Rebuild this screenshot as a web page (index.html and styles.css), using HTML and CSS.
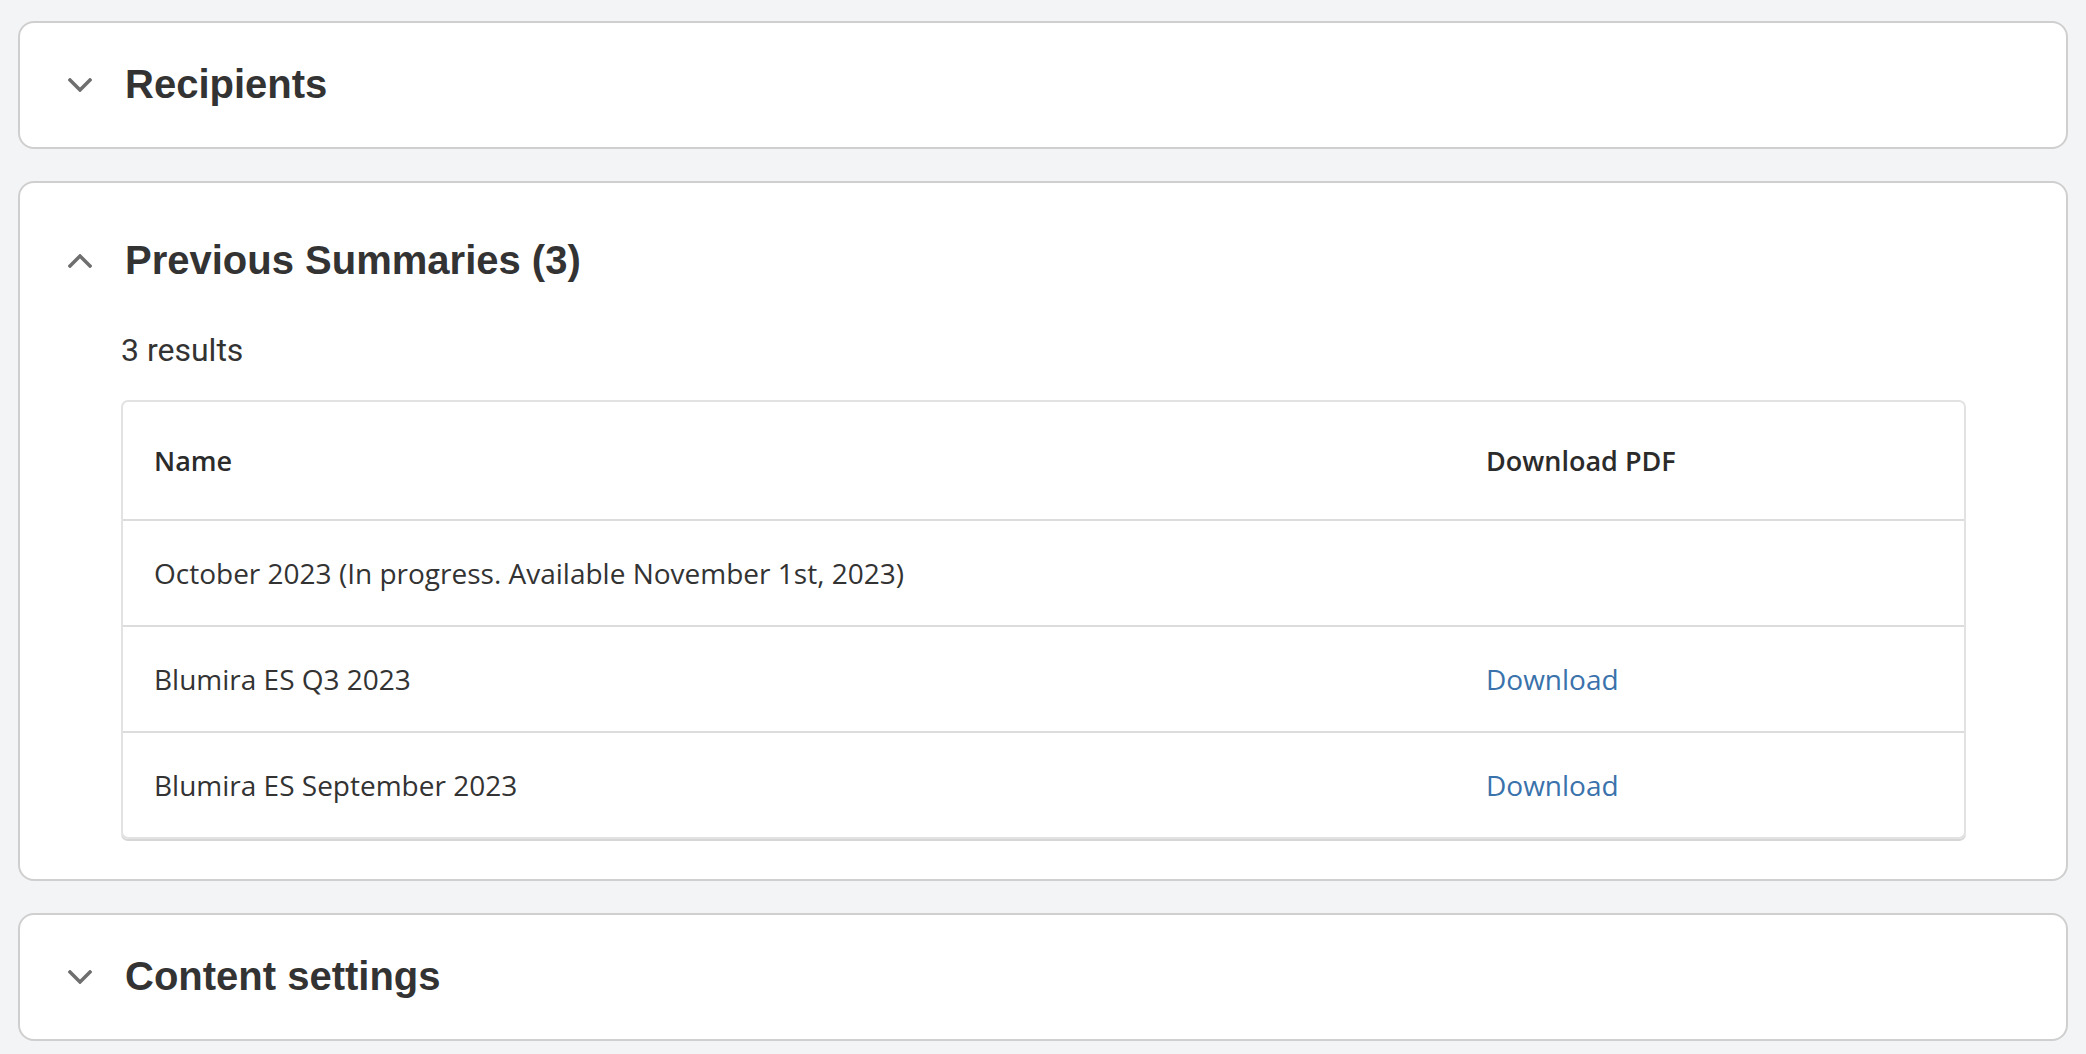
FILE: index.html
```html
<!DOCTYPE html>
<html lang="en">
<head>
<meta charset="UTF-8">
<meta name="viewport" content="width=device-width, initial-scale=1.0">
<title>Summary Settings</title>
<link rel="stylesheet" href="styles.css">
</head>
<body>
<div class="page">

  <div class="card">
    <div class="card-head">
      <svg class="chevron" viewBox="0 0 24 14"><polyline points="2,2 12,12 22,2"/></svg>
      <h2>Recipients</h2>
    </div>
  </div>

  <div class="card open">
    <div class="card-head">
      <svg class="chevron" viewBox="0 0 24 14"><polyline points="2,12 12,2 22,12"/></svg>
      <h2>Previous Summaries (3)</h2>
    </div>
    <div class="card-body">
      <p class="count">3 results</p>
      <div class="table-wrap">
        <table class="summary-table">
          <tr>
            <th class="col-name">Name</th>
            <th class="col-pdf">Download PDF</th>
          </tr>
          <tr>
            <td>October 2023 (In progress. Available November 1st, 2023)</td>
            <td></td>
          </tr>
          <tr>
            <td>Blumira ES Q3 2023</td>
            <td><a href="#" class="link">Download</a></td>
          </tr>
          <tr>
            <td>Blumira ES September 2023</td>
            <td><a href="#" class="link">Download</a></td>
          </tr>
        </table>
      </div>
    </div>
  </div>

  <div class="card">
    <div class="card-head">
      <svg class="chevron" viewBox="0 0 24 14"><polyline points="2,2 12,12 22,2"/></svg>
      <h2>Content settings</h2>
    </div>
  </div>

</div>
</body>
</html>
```

FILE: styles.css
```css
body {
    margin: 0;
    background-color: #f3f4f6;
    font-family: "Open Sans", sans-serif;
    color: #333;
}

.page {
    display: flex;
    flex-direction: column;
    gap: 32px;
    padding: 21px 18px 0 18px;
}

.card {
    background-color: #fff;
    border: 2px solid #cfcfcf;
    border-radius: 16px;
}

.card-head {
    display: flex;
    align-items: center;
    padding: 38px 30px 39px 48px;
}

.card.open .card-head {
    padding-top: 54px;
    padding-bottom: 0;
}

.chevron {
    width: 24px;
    height: 14px;
    fill: none;
    stroke: #6f6f6f;
    stroke-width: 3.5;
    stroke-linecap: square;
    margin-right: 33px;
    flex-shrink: 0;
}

.card-head h2 {
    margin: 0;
    font-family: "Liberation Sans", Arial, sans-serif;
    font-weight: bold;
    font-size: 40px;
    line-height: 47px;
    color: #333;
}

.card-body {
    padding: 46px 100px 40px 101px;
}

.count {
    margin: 0 0 30px 0;
    font-family: Roboto, sans-serif;
    font-size: 32px;
    line-height: 40px;
    color: #333;
}

.table-wrap {
    border: 2px solid #e2e2e2;
    border-radius: 7px;
    box-shadow: 0 2px 0 #d6d6d6;
    overflow: hidden;
}

.summary-table {
    width: 100%;
    border-collapse: collapse;
}

.summary-table th,
.summary-table td {
    text-align: left;
    padding: 0 31px;
    font-size: 28px;
    color: #333;
}

.summary-table th {
    height: 117px;
    font-weight: 600;
    font-size: 27px;
    color: #2b2b2b;
}

.summary-table td {
    height: 104px;
    border-top: 2px solid #dcdcdc;
}

.col-pdf {
    width: 447px;
}

.link {
    color: #3a72ab;
    text-decoration: none;
}
```
